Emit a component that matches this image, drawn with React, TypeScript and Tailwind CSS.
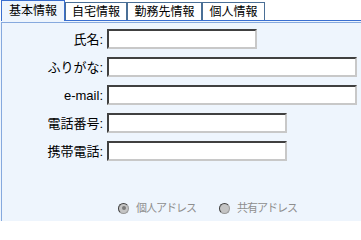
import React from "react";

const FONT = { fontFamily: '"Liberation Sans", "Noto Sans CJK JP", sans-serif' };

const tabs = [
  { label: "自宅情報", w: "w-[62px]" },
  { label: "勤務先情報", w: "w-[75px]" },
  { label: "個人情報", w: "w-[63px]" },
];

const fields = [
  { label: "氏名:", w: "w-[150px]" },
  { label: "ふりがな:", w: "w-[250px]" },
  { label: "e-mail:", w: "w-[250px]" },
  { label: "電話番号:", w: "w-[180px]" },
  { label: "携帯電話:", w: "w-[180px]" },
];

const Radio = ({ checked, label }: { checked?: boolean; label: string }) => (
  <div className="flex items-center gap-[7px]">
    <span className="flex h-[11px] w-[11px] items-center justify-center rounded-full border border-[#9a9a9a] border-l-[#404040] border-t-[#404040] bg-[#c4c4c4]">
      {checked && <span className="h-[4px] w-[4px] rounded-full bg-[#7a7a7a]" />}
    </span>
    <span className="text-[11px] leading-[14px] tracking-[-1px] text-[#8e8e8e]">{label}</span>
  </div>
);

export default function App() {
  return (
    <div className="h-[221px] w-[361px] overflow-hidden bg-white text-black" style={FONT}>
      <div className="flex h-[21px] items-start">
        <div className="relative ml-px flex h-[21px] w-[64px] items-center justify-center border-x border-t border-[#3a6fd0] bg-[#eef5fd] text-[12px] leading-none">
          基本情報
        </div>
        <div className="flex h-[21px] flex-1 items-end border-b border-[#3a6fd0]">
          {tabs.map((t) => (
            <div
              key={t.label}
              className={`flex h-[18px] ${t.w} items-center justify-center border-x border-t border-[#4a6f96] bg-white text-[12px] leading-none`}
            >
              {t.label}
            </div>
          ))}
        </div>
      </div>
      <div className="h-[200px] bg-[#eef5fd] pt-px">
        <div className="ml-px h-full border-l border-t border-[#86a9de] pt-[6px]">
          <div className="flex flex-col gap-[8px]">
            {fields.map((f) => (
              <div key={f.label} className="flex h-[20px] items-center gap-[4px]">
                <div className="w-[101px] text-right text-[13px] leading-none">{f.label}</div>
                <div
                  className={`h-[20px] ${f.w} border-2 border-b-[#c8c8c8] border-l-[#404040] border-r-[#c8c8c8] border-t-[#404040] bg-white`}
                />
              </div>
            ))}
          </div>
          <div className="mt-[40px] flex gap-[23px] pl-[116px]">
            <Radio checked label="個人アドレス" />
            <Radio label="共有アドレス" />
          </div>
        </div>
      </div>
    </div>
  );
}
